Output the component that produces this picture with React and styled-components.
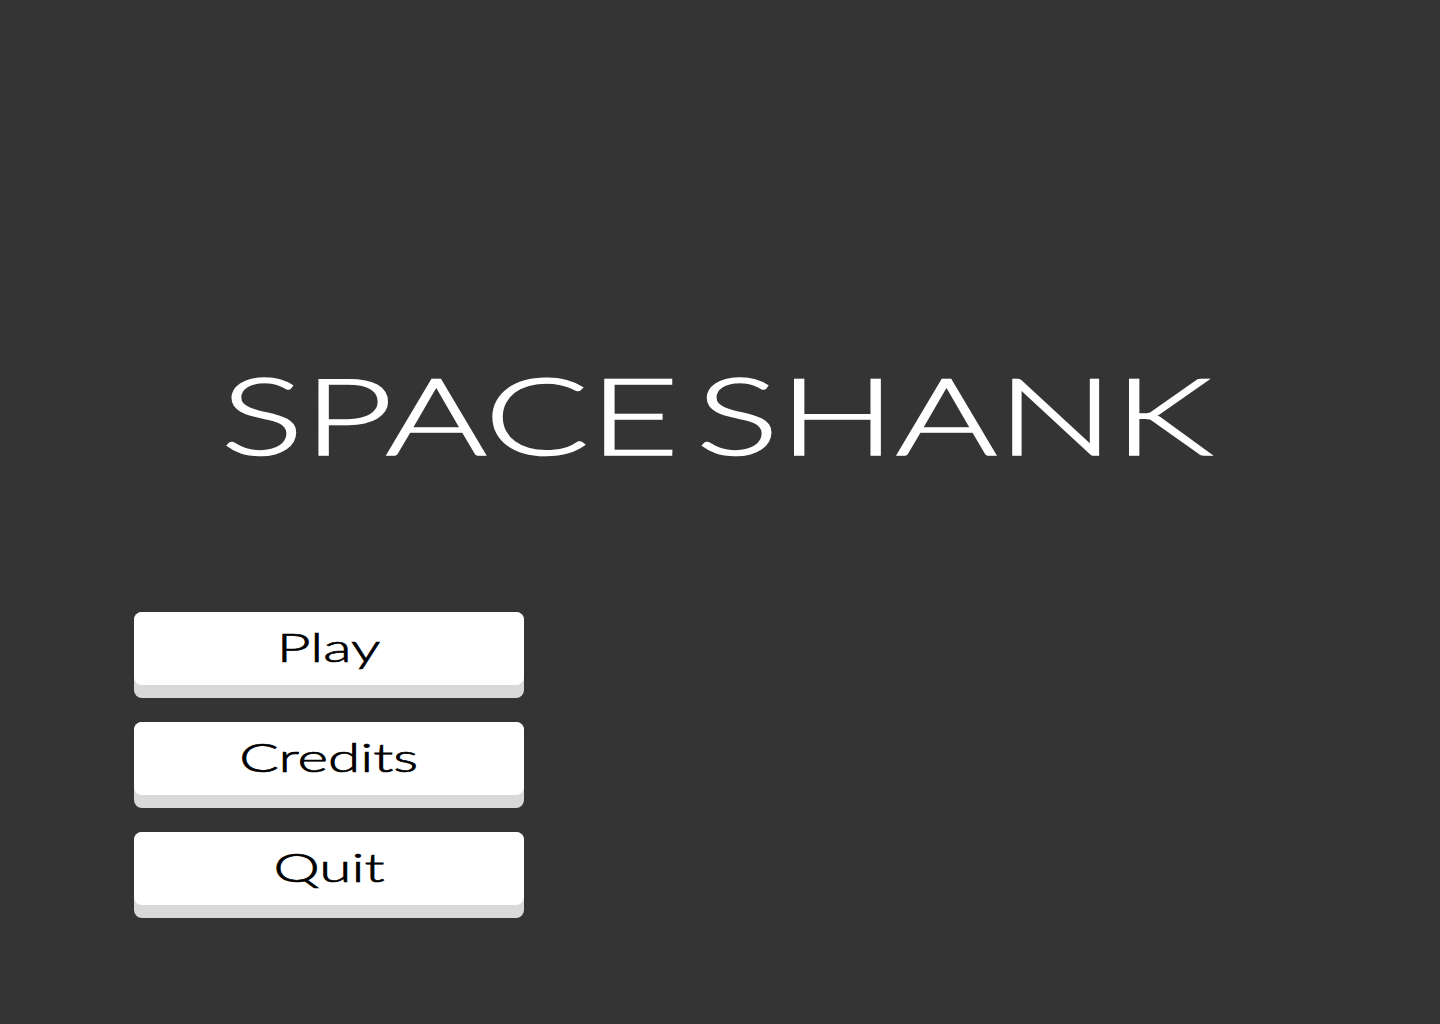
import React from "react";
import styled, { createGlobalStyle } from "styled-components";

const GlobalStyle = createGlobalStyle`
  html, body {
    margin: 0;
    padding: 0;
    background: #343434;
  }
  body {
    font-family: Lato, "Liberation Sans", sans-serif;
  }
`;

const Screen = styled.main`
  width: 1440px;
  height: 1024px;
  background: #343434;
  display: flex;
  flex-direction: column;
  overflow: hidden;
`;

const TitleRow = styled.div`
  display: flex;
  justify-content: center;
  padding-top: 349px;
  padding-right: 6px;
  height: 130px;
`;

const Title = styled.h1`
  margin: 0;
  color: #ffffff;
  font-family: Lato, "Liberation Sans", sans-serif;
  font-weight: 300;
  font-size: 106px;
  line-height: 130px;
  letter-spacing: 0;
  word-spacing: -17px;
  -webkit-text-stroke: 1.6px #ffffff;
  white-space: nowrap;
`;

// extended look: the original face is a wide geometric font
const Wide = styled.span`
  display: inline-block;
  transform: scaleX(${(p) => p.$scale});
  transform-origin: center;
`;

const Menu = styled.nav`
  display: flex;
  flex-direction: column;
  gap: 24px;
  margin-top: 133px;
  margin-left: 134px;
  width: 390px;
`;

const MenuButton = styled.button`
  all: unset;
  box-sizing: border-box;
  height: 86px;
  width: 390px;
  border-radius: 8px;
  background: #d9d9d9;
  padding-bottom: 13px;
  display: flex;
  cursor: pointer;
`;

const Face = styled.span`
  flex: 1;
  border-radius: 8px;
  background: #ffffff;
  display: flex;
  align-items: center;
  justify-content: center;
  color: #000000;
  font-family: Lato, "Liberation Sans", sans-serif;
  font-weight: 300;
  font-size: 39px;
  line-height: 1;
  -webkit-text-stroke: 0.7px #000000;
  padding-bottom: 2px;
`;

const items = ["Play", "Credits", "Quit"];

export default function App() {
  return (
    <>
      <GlobalStyle />
      <Screen>
        <TitleRow>
          <Title>
            <Wide $scale={1.46}>SPACE SHANK</Wide>
          </Title>
        </TitleRow>
        <Menu>
          {items.map((label) => (
            <MenuButton key={label}>
              <Face>
                <Wide $scale={1.5}>{label}</Wide>
              </Face>
            </MenuButton>
          ))}
        </Menu>
      </Screen>
    </>
  );
}
